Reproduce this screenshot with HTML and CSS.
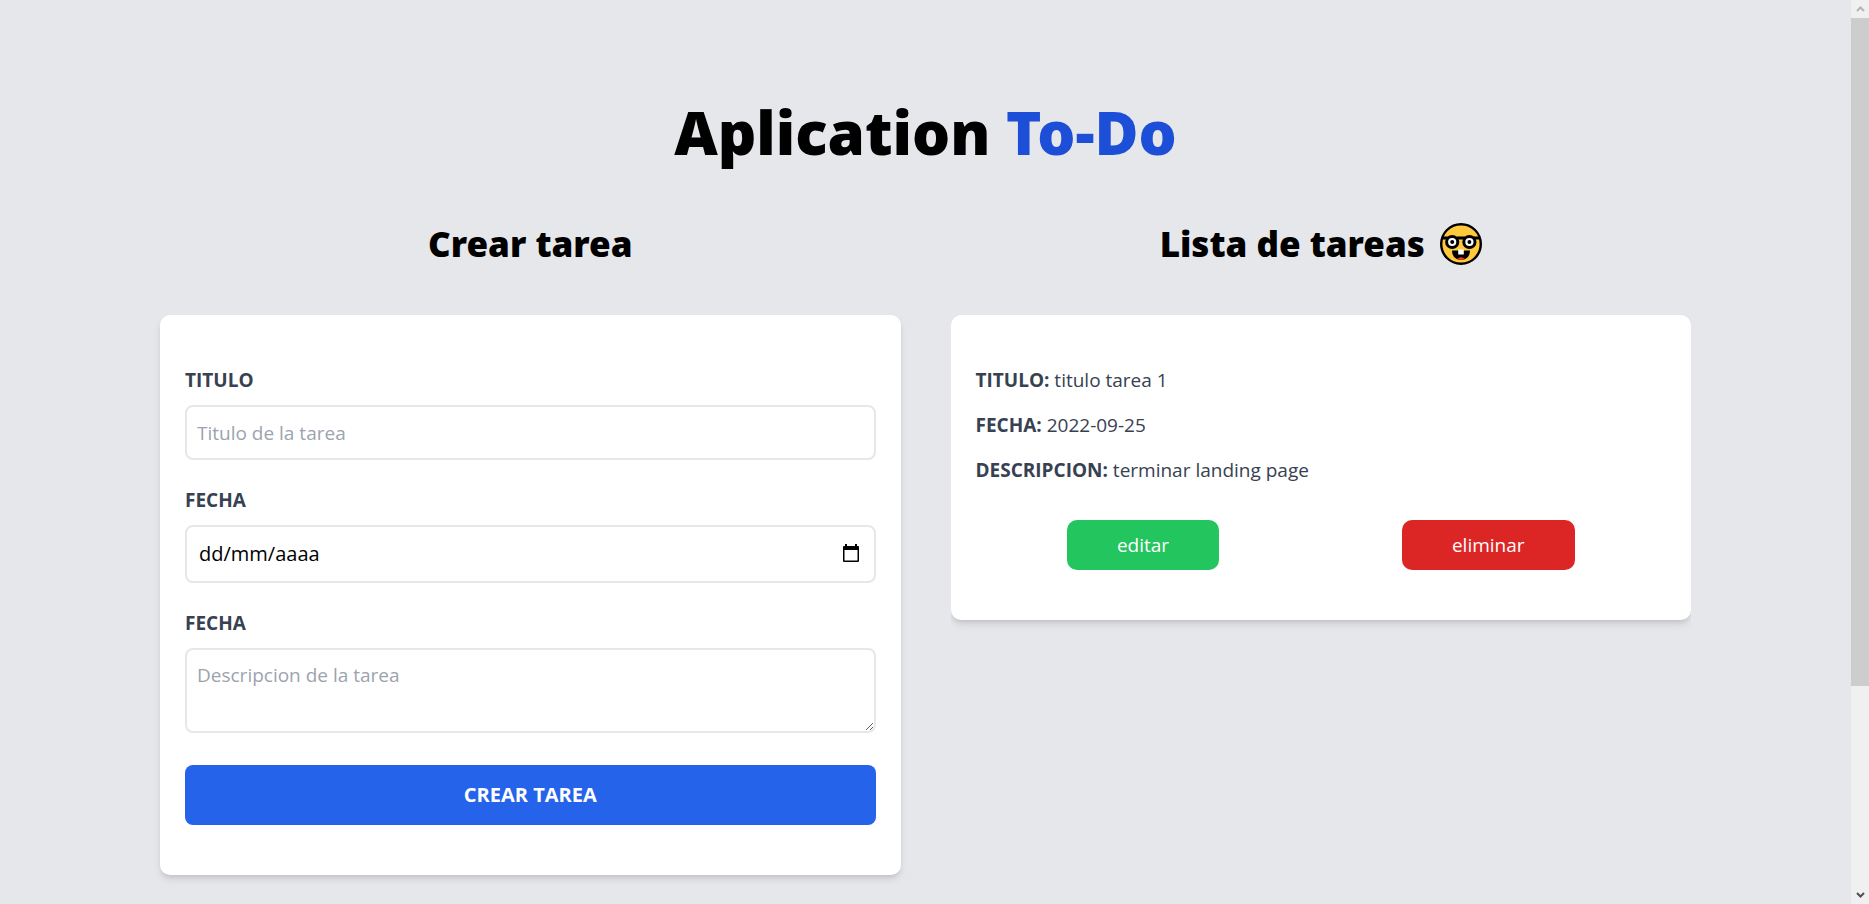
FILE: index.html
```html
<!DOCTYPE html>
<html lang="es">
<head>
  <meta charset="utf-8">
  <meta name="viewport" content="width=device-width, initial-scale=1">
  <title>Aplication To-Do</title>
  <link rel="stylesheet" href="styles.css">
</head>
<body>
  <div class="window">
    <main class="page">
      <h1 class="title">Aplication <span class="title-accent">To-Do</span></h1>
      <div class="columns">
        <section class="column">
          <h2 class="heading">Crear tarea</h2>
          <form class="card form">
            <div class="field">
              <label class="label" for="titulo">TITULO</label>
              <input class="control" id="titulo" type="text" placeholder="Titulo de la tarea">
            </div>
            <div class="field">
              <label class="label" for="fecha">FECHA</label>
              <div class="control date">
                <input class="date-input" id="fecha" type="text" placeholder="dd/mm/aaaa">
                <button class="date-button" type="button" aria-label="Abrir calendario">
                  <svg width="20" height="20" viewBox="0 0 20 20" aria-hidden="true">
                    <path fill-rule="evenodd" d="M4 0h2v2h8V0h2v2h1a1 1 0 0 1 1 1v14a1 1 0 0 1-1 1H3a1 1 0 0 1-1-1V3a1 1 0 0 1 1-1h1zM3.500 6v10.500h13V6z"/>
                  </svg>
                </button>
              </div>
            </div>
            <div class="field">
              <label class="label" for="descripcion">FECHA</label>
              <textarea class="control area" id="descripcion" rows="2" placeholder="Descripcion de la tarea"></textarea>
            </div>
            <button class="submit" type="submit">CREAR TAREA</button>
          </form>
        </section>
        <section class="column">
          <h2 class="heading">Lista de tareas
            <svg class="emoji" viewBox="0 0 42 42" role="img" aria-label="nerd">
              <circle cx="21" cy="21" r="19.800" fill="#ffc83d" stroke="#000" stroke-width="2.400"/>
              <path d="M2 15h7M17 15h8M33 15h7" stroke="#000" stroke-width="3"/>
              <circle cx="12.200" cy="19" r="5.600" fill="#fff" stroke="#000" stroke-width="3"/>
              <circle cx="29.400" cy="19" r="5.600" fill="#fff" stroke="#000" stroke-width="3"/>
              <circle cx="12.200" cy="19" r="2"/>
              <circle cx="29.400" cy="19" r="2"/>
              <path d="M12 27.500h18c0 5.500-3.500 9.500-9 9.500s-9-4-9-9.500z"/>
              <path d="M17 36q4-3.500 8 0q-4 2-8 0z" fill="#f03a17"/>
              <path d="M18.200 26.500h5.600v5h-5.600z" fill="#fff"/>
            </svg>
          </h2>
          <div class="list">
            <article class="card">
              <p class="row"><strong>TITULO:</strong> titulo tarea 1</p>
              <p class="row"><strong>FECHA:</strong> 2022-09-25</p>
              <p class="row"><strong>DESCRIPCION:</strong> terminar landing page</p>
              <div class="actions">
                <button class="action edit" type="button">editar</button>
                <button class="action delete" type="button">eliminar</button>
              </div>
            </article>
          </div>
        </section>
      </div>
    </main>
    <div class="scrollbar" aria-hidden="true">
      <svg class="arrow arrow-up" viewBox="0 0 18 18"><path d="M6 11l3.500-3.500L13 11"/></svg>
      <div class="thumb"></div>
      <div class="track"></div>
      <svg class="arrow" viewBox="0 0 18 18"><path d="M6 7l3.500 3.500L13 7"/></svg>
    </div>
  </div>
</body>
</html>
```
FILE: styles.css
```css
*,
*::before,
*::after {
  box-sizing: border-box;
}

body {
  margin: 0;
  background: #e5e7eb;
  color: #000;
  font-family: "Segoe UI", "Open Sans", "Noto Sans", sans-serif;
  font-size: 19px;
  line-height: 30px;
}

h1,
h2,
p {
  margin: 0;
}

button,
input,
textarea {
  font: inherit;
  color: inherit;
}

button {
  border: 0;
  cursor: pointer;
}

.window {
  display: flex;
  height: 100vh;
}

.page {
  flex: 1;
  padding: 97px 160px 0;
  overflow-y: auto;
  scrollbar-width: none;
}

.title {
  font-family: "Segoe UI", "Noto Sans", sans-serif;
  font-size: 60px;
  font-weight: 900;
  line-height: 70px;
  text-align: center;
}

.title-accent {
  color: #1d4ed8;
}

.columns {
  display: grid;
  grid-template-columns: 1fr 1fr;
  gap: 50px;
  margin-top: 54px;
}

.heading {
  display: flex;
  align-items: center;
  justify-content: center;
  gap: 15px;
  height: 45px;
  margin-bottom: 49px;
  font-family: "Segoe UI", "Noto Sans", sans-serif;
  font-size: 35px;
  font-weight: 900;
  line-height: 45px;
}

.emoji {
  width: 42px;
  height: 42px;
}

.card {
  padding: 50px 25px;
  border-radius: 10px;
  background: #fff;
  box-shadow: 0 5px 8px -1px rgb(0 0 0 / 10%), 0 3px 5px -2px rgb(0 0 0 / 10%);
}

.list {
  padding-bottom: 20px;
  overflow-x: clip;
}

.field {
  margin-bottom: 25px;
}

.label {
  display: block;
  margin-bottom: 10px;
  color: #374151;
  font-weight: 700;
}

.control {
  display: block;
  width: 100%;
  height: 55px;
  padding: 10px;
  border: 2px solid #e5e7eb;
  border-radius: 8px;
  background: #fff;
}

.control::placeholder {
  color: #9ca3af;
  opacity: 1;
}

.date {
  display: flex;
  align-items: center;
  height: 58px;
  padding: 10px 13px 10px 12px;
}

.date-input {
  flex: 1;
  min-width: 0;
  padding: 0;
  border: 0;
  outline: 0;
  background: none;
  font-size: 20px;
}

.date-input::placeholder {
  color: #000;
  opacity: 1;
}

.date-button {
  display: flex;
  padding: 0;
  background: none;
}

.area {
  height: 85px;
}

.submit {
  display: block;
  width: 100%;
  margin-top: 32px;
  padding: 15px;
  border-radius: 8px;
  background: #2563eb;
  color: #fff;
  font-size: 20px;
  font-weight: 700;
}

.row {
  margin-bottom: 15px;
  color: #374151;
}

.actions {
  display: flex;
  justify-content: space-around;
  margin-top: 35px;
}

.action {
  padding: 10px 50px;
  border-radius: 10px;
  color: #fff;
}

.edit {
  background: #22c55e;
}

.delete {
  background: #dc2626;
}

.scrollbar {
  display: grid;
  grid-template-rows: 18px 668fr 200fr 18px;
  width: 18px;
  background: #f0f0f0;
}

.thumb {
  background: #cdcdcd;
}

.arrow {
  width: 18px;
  height: 18px;
  fill: none;
  stroke: #505050;
  stroke-width: 2;
}

.arrow-up {
  stroke: #b4b4b4;
}
```
